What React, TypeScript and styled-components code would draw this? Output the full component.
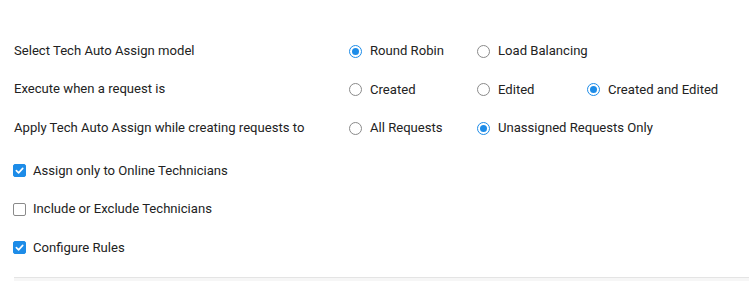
import React from 'react';
import styled, { createGlobalStyle } from 'styled-components';

const GlobalStyle = createGlobalStyle`
  body {
    margin: 0;
    background: #fff;
    font-family: Roboto, "Liberation Sans", sans-serif;
    color: #222;
  }
`;

type Option = { label: string; checked?: boolean };

const settings: { label: string; options: Option[] }[] = [
  {
    label: 'Select Tech Auto Assign model',
    options: [{ label: 'Round Robin', checked: true }, { label: 'Load Balancing' }],
  },
  {
    label: 'Execute when a request is',
    options: [{ label: 'Created' }, { label: 'Edited' }, { label: 'Created and Edited', checked: true }],
  },
  {
    label: 'Apply Tech Auto Assign while creating requests to',
    options: [{ label: 'All Requests' }, { label: 'Unassigned Requests Only', checked: true }],
  },
];

const toggles: Option[] = [
  { label: 'Assign only to Online Technicians', checked: true },
  { label: 'Include or Exclude Technicians' },
  { label: 'Configure Rules', checked: true },
];

const App = () => (
  <>
    <GlobalStyle />
    <Page>
      <SettingsGrid>
        {settings.map((s) => (
          <React.Fragment key={s.label}>
            <FieldLabel>{s.label}</FieldLabel>
            <Options>
              {s.options.map((o) => (
                <RadioItem key={o.label}>
                  <RadioCircle checked={!!o.checked} />
                  {o.label}
                </RadioItem>
              ))}
            </Options>
          </React.Fragment>
        ))}
      </SettingsGrid>
      <Toggles>
        {toggles.map((t) => (
          <CheckItem key={t.label}>
            <CheckBox checked={!!t.checked}>
              {t.checked && (
                <svg width="9" height="9" viewBox="0 0 10 10">
                  <path d="M1.5 5.2 L4 7.6 L8.6 2.6" fill="none" stroke="#fff" strokeWidth="1.8" strokeLinecap="round" strokeLinejoin="round" />
                </svg>
              )}
            </CheckBox>
            {t.label}
          </CheckItem>
        ))}
      </Toggles>
      <Footer />
    </Page>
  </>
);

export default App;

const Page = styled.div`
  padding: 32px 0 0 14px;
  font-size: 13.1px;
  height: 281px;
  box-sizing: border-box;
  overflow: hidden;
`;

const SettingsGrid = styled.div`
  display: grid;
  grid-template-columns: 335px 1fr;
  grid-auto-rows: 38.5px;
  align-items: center;
`;

const FieldLabel = styled.div`
  line-height: 18px;
  margin-top: -1px;
`;

const Options = styled.div`
  display: grid;
  grid-template-columns: 128px 110px auto;
  align-items: center;
`;

const RadioItem = styled.label`
  display: flex;
  align-items: center;
  gap: 8px;
  line-height: 18px;
  white-space: nowrap;
`;

const RadioCircle = styled.span<{ checked: boolean }>`
  width: 13px;
  height: 13px;
  box-sizing: border-box;
  border-radius: 50%;
  border: 1px solid ${(p) => (p.checked ? '#1d8ce8' : '#8a8a8a')};
  display: flex;
  align-items: center;
  justify-content: center;
  flex-shrink: 0;

  &::after {
    content: '';
    display: ${(p) => (p.checked ? 'block' : 'none')};
    width: 7px;
    height: 7px;
    border-radius: 50%;
    background: #1d8ce8;
  }
`;

const Toggles = styled.div`
  display: flex;
  flex-direction: column;
  padding-top: 4px;
`;

const CheckItem = styled.label`
  display: flex;
  align-items: center;
  gap: 7px;
  height: 38.5px;
  line-height: 18px;
  margin-left: -1px;
`;

const CheckBox = styled.span<{ checked: boolean }>`
  width: 13px;
  height: 13px;
  box-sizing: border-box;
  border-radius: 2px;
  border: 1px solid ${(p) => (p.checked ? '#1d8ce8' : '#8a8a8a')};
  background: ${(p) => (p.checked ? '#1d8ce8' : '#fff')};
  display: flex;
  align-items: center;
  justify-content: center;
`;

const Footer = styled.div`
  margin-top: 10px;
  height: 20px;
  background: #f6f6f6;
  border-top: 1px solid #e4e4e4;
`;
